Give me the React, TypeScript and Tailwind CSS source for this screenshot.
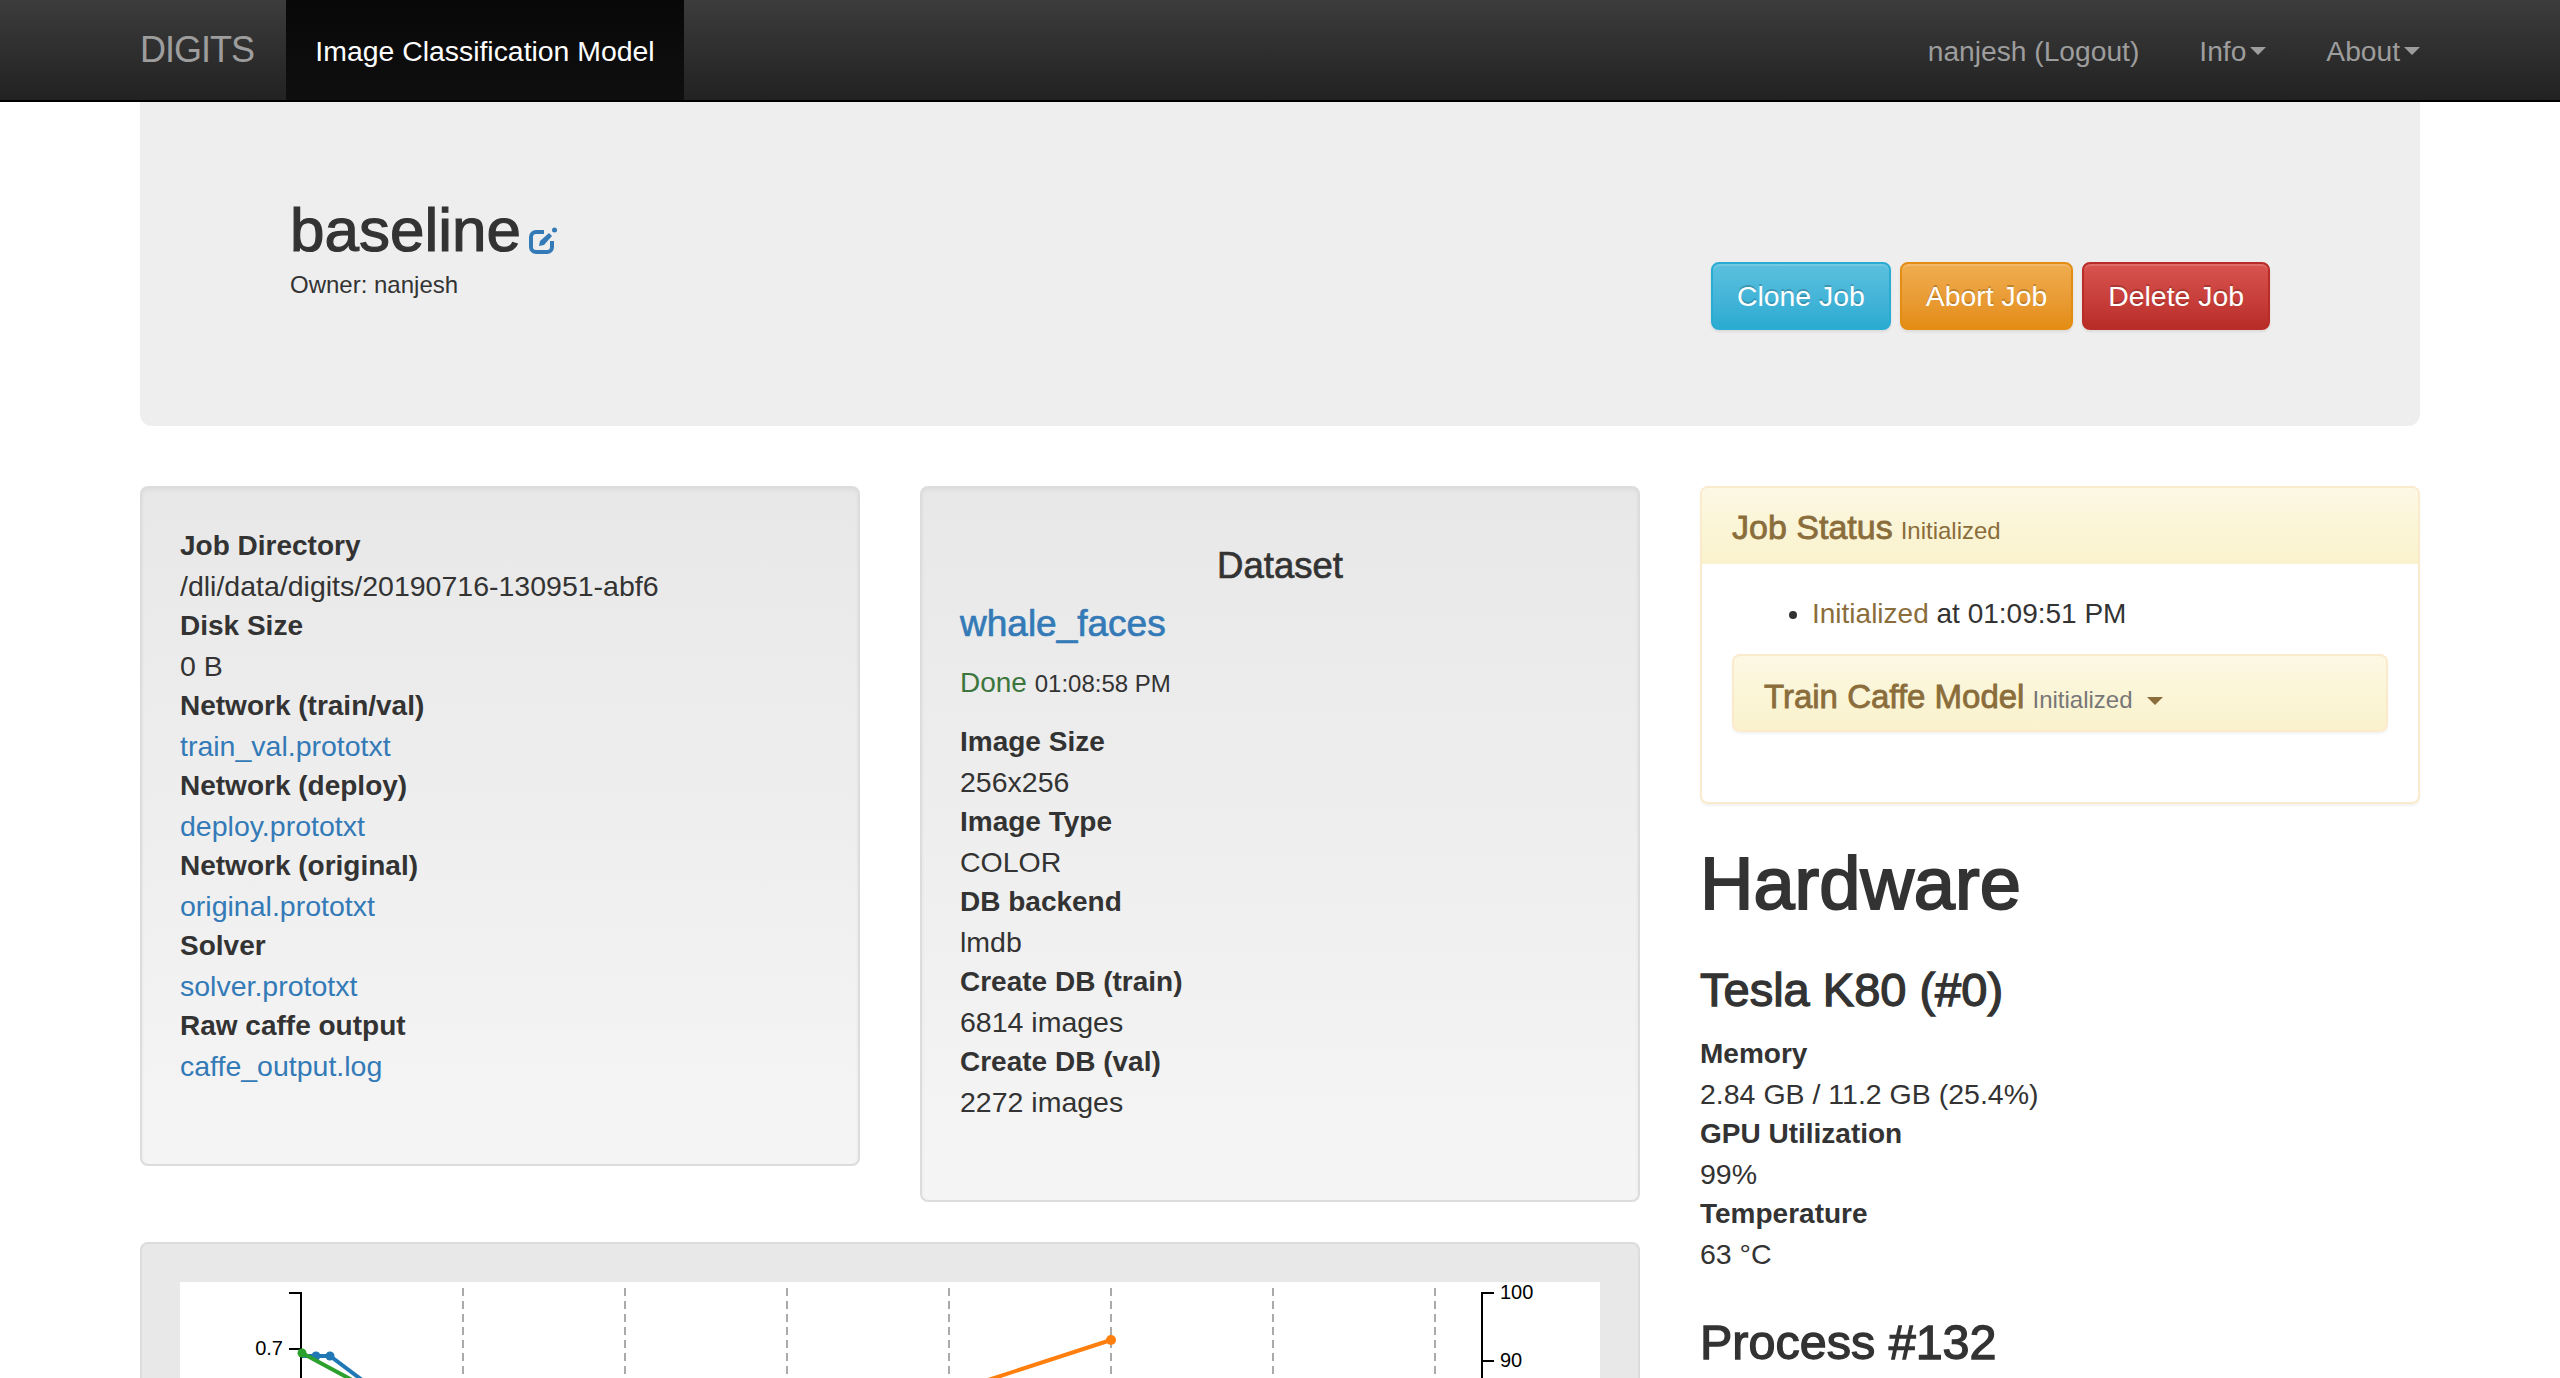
const sans = '[font-family:"Liberation_Sans",Arial,sans-serif]';

const jobInfo = [
  ['Job Directory', '/dli/data/digits/20190716-130951-abf6'],
  ['Disk Size', '0 B'],
  ['Network (train/val)', 'train_val.prototxt', true],
  ['Network (deploy)', 'deploy.prototxt', true],
  ['Network (original)', 'original.prototxt', true],
  ['Solver', 'solver.prototxt', true],
  ['Raw caffe output', 'caffe_output.log', true],
] as const;

const datasetInfo = [
  ['Image Size', '256x256'],
  ['Image Type', 'COLOR'],
  ['DB backend', 'lmdb'],
  ['Create DB (train)', '6814 images'],
  ['Create DB (val)', '2272 images'],
];

const hardware = [
  ['Memory', '2.84 GB / 11.2 GB (25.4%)'],
  ['GPU Utilization', '99%'],
  ['Temperature', '63 °C'],
];

function Field({ label, value, link }: { label: string; value: string; link?: boolean }) {
  return (
    <>
      <dt className="text-[28px] leading-[40px] font-bold">{label}</dt>
      <dd className={`text-[28.5px] leading-[40px] ${link ? 'text-[#337ab7]' : ''}`}>{value}</dd>
    </>
  );
}

function Caret({ className }: { className: string }) {
  return <span className={`inline-block h-0 w-0 border-x-[8px] border-t-[8px] border-x-transparent ${className}`} />;
}

function JobButton({ label, className }: { label: string; className: string }) {
  return (
    <button
      className={`h-[68px] rounded-lg border-2 px-[24px] text-[28.4px] text-white shadow-[inset_0_2px_0_rgba(255,255,255,0.15),0_2px_3px_rgba(0,0,0,0.08)] [text-shadow:0_-2px_0_rgba(0,0,0,0.2)] ${className}`}
    >
      {label}
    </button>
  );
}

function Chart() {
  const grid = [463, 625, 787, 949, 1111, 1273, 1435];
  return (
    <svg className="block h-[96px] w-[1420px]" viewBox="180 1282 1420 96">
      {grid.map((x) => (
        <line key={x} x1={x} x2={x} y1={1288} y2={1378} stroke="#aaa" strokeWidth="2" strokeDasharray="8 5" />
      ))}
      <path d="M289 1293H301V1378M289 1349H301" fill="none" stroke="#000" strokeWidth="2" />
      <path d="M1494 1293H1482V1378M1482 1361H1494" fill="none" stroke="#000" strokeWidth="2" />
      <text x="283" y="1355" textAnchor="end" fontSize="20" fontFamily="Liberation Sans">0.7</text>
      <text x="1500" y="1299" fontSize="20" fontFamily="Liberation Sans">100</text>
      <text x="1500" y="1367" fontSize="20" fontFamily="Liberation Sans">90</text>
      <path d="M302 1356L316 1356L330 1356L362 1380" fill="none" stroke="#1f77b4" strokeWidth="4" />
      <circle cx="316" cy="1356" r="4.5" fill="#1f77b4" />
      <circle cx="330" cy="1356" r="4.5" fill="#1f77b4" />
      <path d="M302 1353L352 1380" fill="none" stroke="#2ca02c" strokeWidth="4" />
      <circle cx="302" cy="1353" r="4.5" fill="#2ca02c" />
      <path d="M988 1380L1111 1340" fill="none" stroke="#ff7f0e" strokeWidth="4" />
      <circle cx="1111" cy="1340" r="5" fill="#ff7f0e" />
    </svg>
  );
}

export default function App() {
  return (
    <div className={`h-[1378px] overflow-hidden bg-white text-[#333] ${sans}`}>
      <nav className="h-[102px] border-b-2 border-black bg-gradient-to-b from-[#3c3c3c] to-[#222]">
        <div className="mx-[140px] flex h-[100px] items-center text-[28px] text-[#9d9d9d]">
          <span className="w-[146px] text-[36px] tracking-[-1px]">DIGITS</span>
          <span className="flex h-full w-[398px] items-center justify-center bg-gradient-to-b from-[#080808] to-[#0f0f0f] pt-[2px] text-[28.4px] text-white">
            Image Classification Model
          </span>
          <div className="ml-auto flex items-center pt-[2px] text-[28.2px]">
            <span>nanjesh (Logout)</span>
            <span className="ml-[60px] flex items-center gap-[4px]">
              Info
              <Caret className="border-t-[#9d9d9d]" />
            </span>
            <span className="ml-[60px] flex items-center gap-[4px]">
              About
              <Caret className="border-t-[#9d9d9d]" />
            </span>
          </div>
        </div>
      </nav>

      <main className="mx-[140px]">
        <header className="flex h-[324px] items-center rounded-b-xl bg-[#eee] pr-[150px] pl-[150px]">
          <div className="-mt-[31px]">
            <h1 className="flex items-end text-[62px] leading-[66px] [-webkit-text-stroke:1.2px_currentColor]">
              baseline
              <svg viewBox="0 0 28 27" className="mb-[9px] ml-[8px] h-[27px] w-[28px]" fill="none">
                <path d="M15 5H7a5 5 0 0 0-5 5v10a5 5 0 0 0 5 5h11a5 5 0 0 0 5-5v-6" stroke="#337ab7" strokeWidth="4" />
                <path d="M10 19l1-5L20 6l3 3-8 9z" fill="#337ab7" stroke="none" />
                <circle cx="25.5" cy="3" r="2.5" fill="#337ab7" stroke="none" />
              </svg>
            </h1>
            <p className="mt-[6px] text-[24px] leading-[32px]">Owner: nanjesh</p>
          </div>
          <div className="mt-[64px] ml-auto flex gap-[9px]">
            <JobButton label="Clone Job" className="border-[#2aabd2] bg-gradient-to-b from-[#5bc0de] to-[#2aabd2]" />
            <JobButton label="Abort Job" className="border-[#e38d13] bg-gradient-to-b from-[#f0ad4e] to-[#e38d13]" />
            <JobButton label="Delete Job" className="border-[#b92c28] bg-gradient-to-b from-[#d9534f] to-[#b92c28]" />
          </div>
        </header>

        <div className="mt-[60px] flex gap-[60px]">
          <div className="w-[1500px]">
            <div className="flex items-start gap-[60px]">
              <dl className="h-[680px] w-[720px] rounded-lg border-2 border-[#dcdcdc] bg-gradient-to-b from-[#e8e8e8] to-[#f5f5f5] px-[38px] pt-[38px] shadow-[inset_0_2px_4px_rgba(0,0,0,0.05)]">
                {jobInfo.map(([label, value, link]) => (
                  <Field key={label} label={label} value={value} link={link} />
                ))}
              </dl>
              <section className="h-[716px] w-[720px] rounded-lg border-2 border-[#dcdcdc] bg-gradient-to-b from-[#e8e8e8] to-[#f5f5f5] px-[38px] pt-[58px] shadow-[inset_0_2px_4px_rgba(0,0,0,0.05)]">
                <h4 className="text-center text-[36.5px] leading-[40px] [-webkit-text-stroke:0.7px_currentColor]">Dataset</h4>
                <a className="mt-[16px] block text-[37px] leading-[44px] text-[#337ab7] [-webkit-text-stroke:0.7px_currentColor]">whale_faces</a>
                <p className="mt-[17px] text-[28px] leading-[40px] text-[#3c763d]">
                  Done <span className="text-[24px] text-[#333]">01:08:58 PM</span>
                </p>
                <dl className="mt-[18px]">
                  {datasetInfo.map(([label, value]) => (
                    <Field key={label} label={label} value={value} />
                  ))}
                </dl>
              </section>
            </div>
            <div className="mt-[40px] h-[200px] rounded-t-lg border-2 border-b-0 border-[#dcdcdc] bg-[#e8e8e8] px-[38px] pt-[38px]">
              <div className="bg-white">
                <Chart />
              </div>
            </div>
          </div>

          <aside className="w-[720px]">
            <section className="h-[318px] rounded-lg border-2 border-[#faebcc] bg-white shadow-[0_2px_2px_rgba(0,0,0,0.05)]">
              <h3 className="flex h-[76px] items-baseline gap-[8px] rounded-t-md bg-gradient-to-b from-[#fcf8e3] to-[#faf2cc] px-[30px] pt-[14px] text-[34px] text-[#8a6d3b]">
                <span className="[-webkit-text-stroke:0.8px_currentColor]">Job Status</span>
                <small className="text-[24px] font-normal">Initialized</small>
              </h3>
              <ul className="mt-[30px] ml-[110px] list-disc text-[28px] leading-[40px]">
                <li>
                  <span className="text-[#8a6d3b]">Initialized</span> at 01:09:51 PM
                </li>
              </ul>
              <div className="mx-[30px] mt-[20px] flex h-[78px] items-baseline gap-[8px] rounded-lg border-2 border-[#faebcc] bg-gradient-to-b from-[#fcf8e3] to-[#faf2cc] px-[30px] pt-[16px] text-[33px] text-[#8a6d3b] shadow-[0_2px_3px_rgba(0,0,0,0.05)]">
                <span className="[-webkit-text-stroke:0.8px_currentColor]">Train Caffe Model</span>
                <small className="text-[24px] font-normal text-[#777]">Initialized</small>
                <Caret className="ml-[6px] self-center border-t-[#8a6d3b]" />
              </div>
            </section>
            <h1 className="mt-[40px] text-[74px] leading-[80px] [-webkit-text-stroke:2px_currentColor]">Hardware</h1>
            <h2 className="mt-[40px] text-[47px] leading-[52px] [-webkit-text-stroke:1.3px_currentColor]">Tesla K80 (#0)</h2>
            <dl className="mt-[18px]">
              {hardware.map(([label, value]) => (
                <Field key={label} label={label} value={value} />
              ))}
            </dl>
            <h2 className="mt-[42px] text-[48.5px] leading-[52px] [-webkit-text-stroke:1.3px_currentColor]">Process #132</h2>
          </aside>
        </div>
      </main>
    </div>
  );
}
